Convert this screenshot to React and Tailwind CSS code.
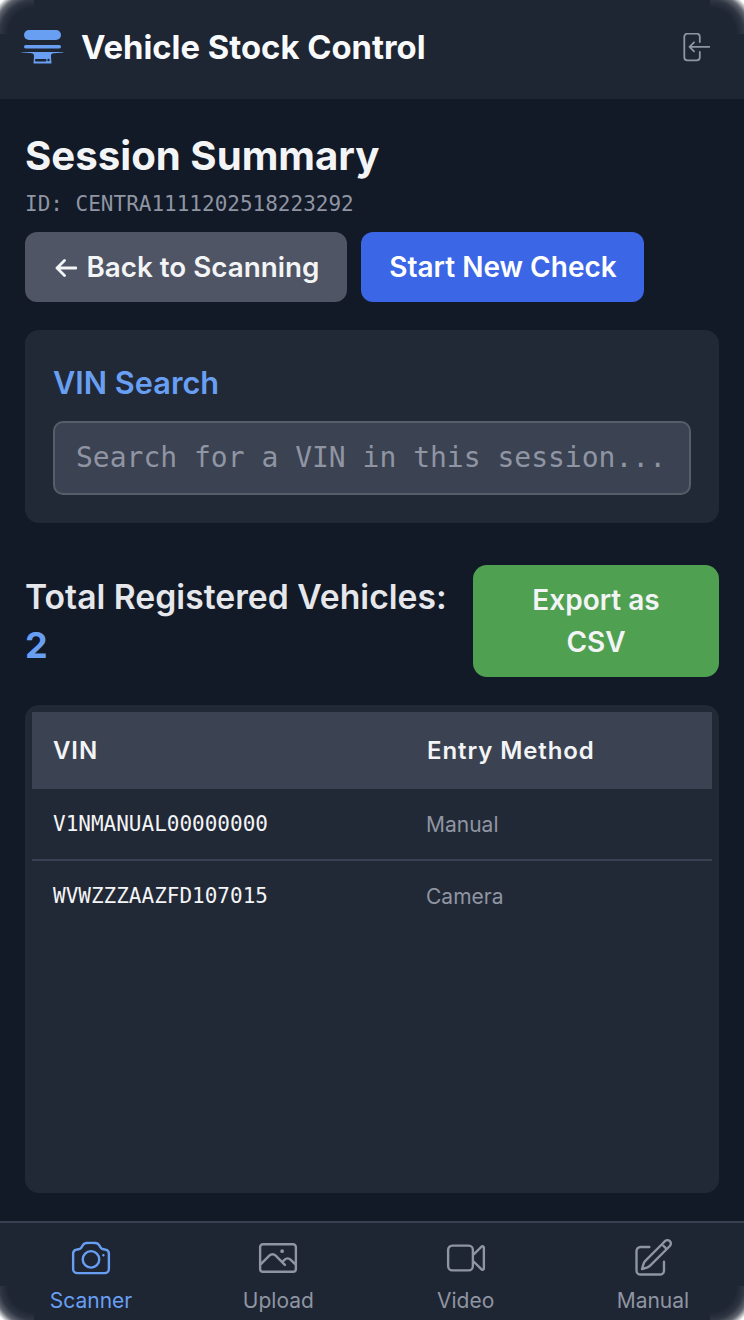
import React from "react";
import { HiOutlineCamera, HiOutlinePhoto, HiOutlineVideoCamera, HiOutlinePencilSquare } from "react-icons/hi2";

const mono = "font-['DejaVu_Sans_Mono',monospace]";

const Logo = () => (
  <svg width="44" height="36" viewBox="0 0 44 36" fill="#689ff3">
    <rect x="3" y="0" width="37" height="10" rx="5" />
    <rect x="3" y="15" width="37" height="3.500" rx="1.750" />
    <path d="M0 22h43c-3 1.200-9 .8-11.500 1.500-1.500.5-1.500 2-1.500 3l.5 7H12.500l.5-7c0-1 0-2.500-1.500-3C9 22.800 3 23.200 0 22z" />
    <rect x="14" y="29" width="11.500" height="2.500" rx="1" fill="#1e2533" />
    <circle cx="27.500" cy="30" r="1.200" fill="#1e2533" />
  </svg>
);

const ExitIcon = () => (
  <svg width="28" height="30" viewBox="0 0 28 30" fill="none" stroke="#8f96a3" strokeWidth="1.800" strokeLinecap="round" strokeLinejoin="round">
    <path d="M17.800 9V3.700a3 3 0 0 0-3-3H5.300a3 3 0 0 0-3 3v20.600a3 3 0 0 0 3 3h9.500a3 3 0 0 0 3-3V19" />
    <path d="M7.500 13.800h20M12 9.300l-4.500 4.500 4.500 4.500" />
  </svg>
);

const cornerClass =
  "pointer-events-none absolute h-[34px] w-[34px]";

const rows = [
  { vin: "V1NMANUAL00000000", method: "Manual" },
  { vin: "WVWZZZAAZFD107015", method: "Camera" },
];

const tabs = [
  { label: "Scanner", icon: HiOutlineCamera, active: true },
  { label: "Upload", icon: HiOutlinePhoto },
  { label: "Video", icon: HiOutlineVideoCamera },
  { label: "Manual", icon: HiOutlinePencilSquare },
];

export default function App() {
  return (
    <div className="relative flex h-[1320px] w-[744px] flex-col overflow-hidden bg-[#121927] font-['Inter',sans-serif] text-white">
      {/* Header */}
      <header className="flex h-[99px] shrink-0 items-center justify-between bg-[#1e2533] pb-[4px] pl-[21px] pr-[34px]">
        <div className="flex items-center gap-[16px]">
          <Logo />
          <h1 className="text-[32.8px] font-bold text-[#f9fafb]">Vehicle Stock Control</h1>
        </div>
        <ExitIcon />
      </header>

      <main className="flex min-h-0 flex-1 flex-col px-[25px] pb-[28px] pt-[32px]">
        <h2 className="text-[40.200px] font-bold leading-[50px] text-[#f3f4f6]">Session Summary</h2>
        <p className={`${mono} mt-[11px] text-[21px] leading-[24px] text-[#8f95a2]`}>ID: CENTRA1111202518223292</p>

        <div className="mt-[16px] flex gap-[14px]">
          <button className="flex h-[70px] w-[322px] items-center justify-center gap-[10px] rounded-[12px] bg-[#4f5564] pl-[2px] pt-[1px] text-[27.800px] font-semibold text-[#f3f4f6]">
            <svg width="22" height="20" viewBox="0 0 22 20" fill="none" stroke="currentColor" strokeWidth="2.800" strokeLinecap="round" strokeLinejoin="round">
              <path d="M2 10h19M9.500 2.500 2 10l7.500 7.500" />
            </svg>
            Back to Scanning
          </button>
          <button className="h-[70px] w-[283px] rounded-[12px] bg-[#3b66e6] pl-[1px] text-[28px] font-semibold text-white">Start New Check</button>
        </div>

        {/* Search */}
        <section className="mt-[28px] rounded-[14px] bg-[#222936] p-[28px]">
          <h3 className="text-[30.700px] font-semibold leading-[50px] text-[#689ff3]">VIN Search</h3>
          <div className={`${mono} mt-[13px] flex h-[74px] items-center rounded-[10px] border-2 border-[#565d6b] bg-[#3b4252] pl-[21px] text-[28px] text-[#8f95a2]`}>
            Search for a VIN in this session...
          </div>
        </section>

        {/* Totals */}
        <div className="mt-[42px] flex items-center justify-between">
          <div className="text-[33.700px] font-semibold leading-[49px] text-[#e5e7eb]">
            Total Registered Vehicles:
            <div className="text-[36px] font-bold text-[#689ff3]">2</div>
          </div>
          <button className="h-[112px] w-[246px] rounded-[14px] bg-[#50a052] px-[40px] text-[28px] font-semibold leading-[42px] text-[#f3f4f6]">Export as CSV</button>
        </div>

        {/* Table */}
        <section className="mt-[28px] flex-1 rounded-[14px] bg-[#222936] px-[7px] pt-[7px]">
          <div className="flex h-[77px] items-center bg-[#3b4252] pt-[1px] text-[24px] font-semibold tracking-[0.900px] text-[#f3f4f6]">
            <div className="w-[395px] pl-[21px]">VIN</div>
            <div>Entry Method</div>
          </div>
          {rows.map((row, i) => (
            <div key={row.vin} className={`flex h-[72px] items-center ${i === 0 ? "border-b-2 border-[#374151] pt-[1px]" : ""}`}>
              <div className={`${mono} w-[394px] pl-[21px] text-[21px] text-[#f3f4f6]`}>{row.vin}</div>
              <div className="text-[21px] text-[#8f95a2]">{row.method}</div>
            </div>
          ))}
        </section>
      </main>

      {/* Bottom nav */}
      <nav className="flex h-[99px] shrink-0 justify-center border-t-2 border-[#374151] bg-[#1e2533]">
        {tabs.map((t) => (
          <div key={t.label} className={`flex w-[187.300px] shrink-0 flex-col items-center pt-[13px] ${t.active ? "text-[#689ff3]" : "text-[#8f95a2]"}`}>
            <t.icon size={44} strokeWidth={1.300} />
            <span className="mt-[7px] text-[21px] leading-[28px]">{t.label}</span>
          </div>
        ))}
      </nav>

      {/* Rounded window corners */}
      <div className={`${cornerClass} left-0 top-0 bg-[radial-gradient(circle_at_100%_100%,transparent_26px,rgba(255,255,255,0.08)_34px,rgba(255,255,255,0.3)_40px,#fff_46px)]`} />
      <div className={`${cornerClass} right-0 top-0 bg-[radial-gradient(circle_at_0%_100%,transparent_26px,rgba(255,255,255,0.08)_34px,rgba(255,255,255,0.3)_40px,#fff_46px)]`} />
      <div className={`${cornerClass} bottom-0 left-0 bg-[radial-gradient(circle_at_100%_0%,transparent_26px,rgba(255,255,255,0.08)_34px,rgba(255,255,255,0.3)_40px,#fff_46px)]`} />
      <div className={`${cornerClass} bottom-0 right-0 bg-[radial-gradient(circle_at_0%_0%,transparent_26px,rgba(255,255,255,0.08)_34px,rgba(255,255,255,0.3)_40px,#fff_46px)]`} />
    </div>
  );
}
